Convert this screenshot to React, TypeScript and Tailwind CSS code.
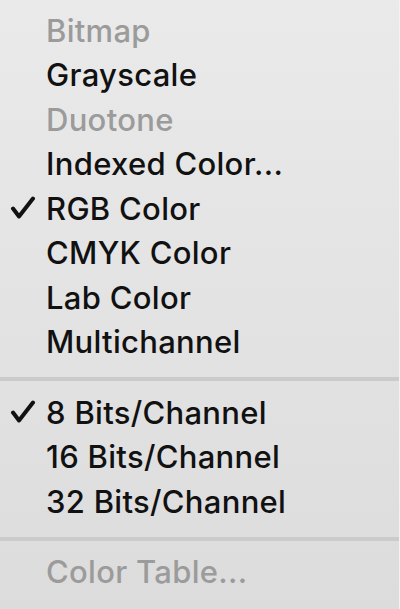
const GROUPS: { label: string; disabled?: boolean; checked?: boolean }[][] = [
  [
    { label: "Bitmap", disabled: true },
    { label: "Grayscale" },
    { label: "Duotone", disabled: true },
    { label: "Indexed Color..." },
    { label: "RGB Color", checked: true },
    { label: "CMYK Color" },
    { label: "Lab Color" },
    { label: "Multichannel" },
  ],
  [
    { label: "8 Bits/Channel", checked: true },
    { label: "16 Bits/Channel" },
    { label: "32 Bits/Channel" },
  ],
  [{ label: "Color Table...", disabled: true }],
];

function Check() {
  return (
    <svg width="26" height="24" viewBox="0 0 26 24" className="absolute left-[10px] top-1/2 -translate-y-1/2">
      <path
        d="M3 12.5 L9 20.5 L23 2.5"
        fill="none"
        stroke="#111"
        strokeWidth="4"
        strokeLinecap="round"
        strokeLinejoin="round"
      />
    </svg>
  );
}

export default function App() {
  return (
    <div
      className="w-[400px] h-[609px] overflow-hidden bg-gradient-to-b from-[#eaeaea] to-[#dcdcdc] pt-2 border-r border-[#f2f2f2]"
      style={{ fontFamily: "Inter, 'Noto Sans', sans-serif" }}
    >
      {GROUPS.map((group, gi) => (
        <div key={gi}>
          {gi > 0 && <div className="h-1 bg-[#cbcbcb] mt-[13px] mb-[9px]" />}
          {group.map((item) => (
            <div
              key={item.label}
              className={`relative h-[44.5px] flex items-center pl-[46px] text-[31px] font-medium tracking-[0.3px] leading-none ${
                item.disabled ? "text-[#9b9b9b]" : "text-[#111111]"
              }`}
            >
              {item.checked && <Check />}
              {item.label}
            </div>
          ))}
        </div>
      ))}
    </div>
  );
}
